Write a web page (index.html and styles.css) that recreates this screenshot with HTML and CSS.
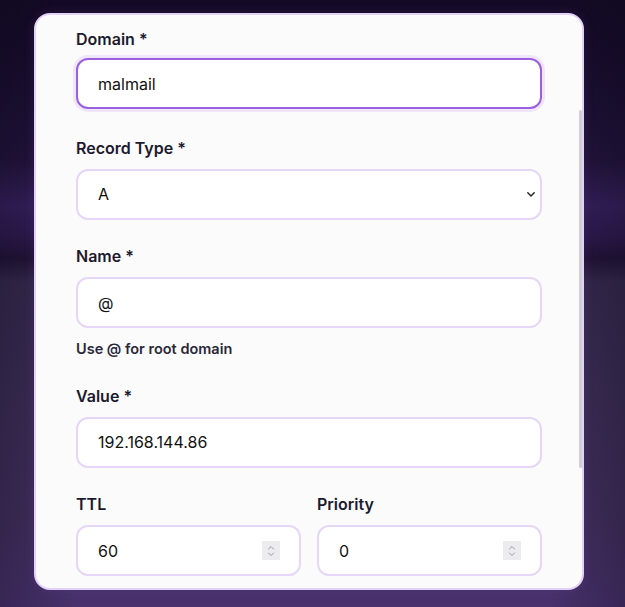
FILE: index.html
```html
<!DOCTYPE html>
<html lang="en">
<head>
<meta charset="utf-8">
<title>DNS Record</title>
<link rel="stylesheet" href="styles.css">
</head>
<body>
<div class="stage">
  <div class="card">
    <form class="form">
      <div class="group">
        <label class="label" for="domain">Domain *</label>
        <input id="domain" class="field is-focused" type="text" value="malmail">
      </div>
      <div class="group">
        <label class="label" for="rtype">Record Type *</label>
        <div class="control">
          <select id="rtype" class="field select"><option>A</option></select>
          <svg class="chev" width="8" height="5" viewBox="0 0 8 5" aria-hidden="true"><path d="M0.8 0.8 L4 4 L7.2 0.8" fill="none" stroke="#222" stroke-width="1.4" stroke-linecap="round" stroke-linejoin="round"/></svg>
        </div>
      </div>
      <div class="group">
        <label class="label" for="name">Name *</label>
        <input id="name" class="field" type="text" value="@">
        <p class="hint">Use @ for root domain</p>
      </div>
      <div class="group">
        <label class="label" for="value">Value *</label>
        <input id="value" class="field" type="text" value="192.168.144.86">
      </div>
      <div class="row">
        <div class="group">
          <label class="label" for="ttl">TTL</label>
          <div class="control">
            <input id="ttl" class="field num" type="number" value="60">
            <span class="spin"><svg width="8" height="12" viewBox="0 0 8 12" aria-hidden="true"><path d="M1.5 4 L4 1.5 L6.5 4 M1.5 8 L4 10.5 L6.5 8" fill="none" stroke="#9a9aa0" stroke-width="1" stroke-linecap="round" stroke-linejoin="round"/></svg></span>
          </div>
        </div>
        <div class="group">
          <label class="label" for="prio">Priority</label>
          <div class="control">
            <input id="prio" class="field num" type="number" value="0">
            <span class="spin"><svg width="8" height="12" viewBox="0 0 8 12" aria-hidden="true"><path d="M1.5 4 L4 1.5 L6.5 4 M1.5 8 L4 10.5 L6.5 8" fill="none" stroke="#9a9aa0" stroke-width="1" stroke-linecap="round" stroke-linejoin="round"/></svg></span>
          </div>
        </div>
      </div>
    </form>
    <div class="thumb"></div>
  </div>
</div>
</body>
</html>
```

FILE: styles.css
```css
html, body {
  margin: 0;
  height: 100%;
}

body {
  font-family: Inter, "Noto Sans", sans-serif;
  background:
    linear-gradient(90deg, rgba(10, 4, 20, 0.25) 0%, rgba(10, 4, 20, 0) 12%, rgba(10, 4, 20, 0) 88%, rgba(10, 4, 20, 0.25) 100%),
    linear-gradient(180deg,
      #140a26 0px,
      #1a0f31 90px,
      #22143c 160px,
      #35215d 205px,
      #2e1b50 235px,
      #221438 258px,
      #362a4e 282px,
      #3c2e56 400px,
      #41305e 520px,
      #48316c 607px);
  overflow: hidden;
}

.stage {
  padding: 13px 0 0 34px;
}

.card {
  position: relative;
  box-sizing: border-box;
  width: 550px;
  height: 577px;
  padding: 12px 40px 0;
  background: #fbfbfc;
  border: 2px solid #e3d1f7;
  border-radius: 16px;
  overflow: hidden;
  box-shadow: 0 0 12px rgba(150, 100, 220, 0.12);
}

.form {
  display: flex;
  flex-direction: column;
  gap: 24.5px;
}

.group {
  display: flex;
  flex-direction: column;
  min-width: 0;
}

.label {
  font-size: 16px;
  line-height: 24px;
  font-weight: 600;
  color: #1b1a2e;
  margin-bottom: 9px;
}

.control {
  position: relative;
}

.field {
  display: block;
  box-sizing: border-box;
  width: 100%;
  height: 51px;
  margin: 0;
  padding: 0 20px;
  font-family: Inter, "Noto Sans", sans-serif;
  font-size: 16px;
  color: #111111;
  background: #ffffff;
  border: 2px solid #e6d6f8;
  border-radius: 12px;
  outline: none;
}

.is-focused {
  border-color: #9b5fe0;
  box-shadow: 0 0 0 3px #f0e6fb;
  transform: translateY(-2px);
}

.select {
  appearance: none;
  -webkit-appearance: none;
}

.chev {
  position: absolute;
  right: 7px;
  top: 23px;
}

.num {
  -moz-appearance: textfield;
}

.num::-webkit-inner-spin-button,
.num::-webkit-outer-spin-button {
  -webkit-appearance: none;
  margin: 0;
}

.spin {
  position: absolute;
  right: 21px;
  top: 16px;
  width: 18px;
  height: 19px;
  display: flex;
  align-items: center;
  justify-content: center;
  background: #ececee;
}

.hint {
  margin: 11px 0 0;
  font-size: 14.5px;
  line-height: 20px;
  font-weight: 600;
  color: #2a2838;
}

.row {
  display: grid;
  grid-template-columns: 1fr 1fr;
  gap: 16px;
}

.thumb {
  position: absolute;
  right: 0;
  top: 95px;
  width: 3px;
  height: 358px;
  border-radius: 2px;
  background: #d0d0d4;
}
```
